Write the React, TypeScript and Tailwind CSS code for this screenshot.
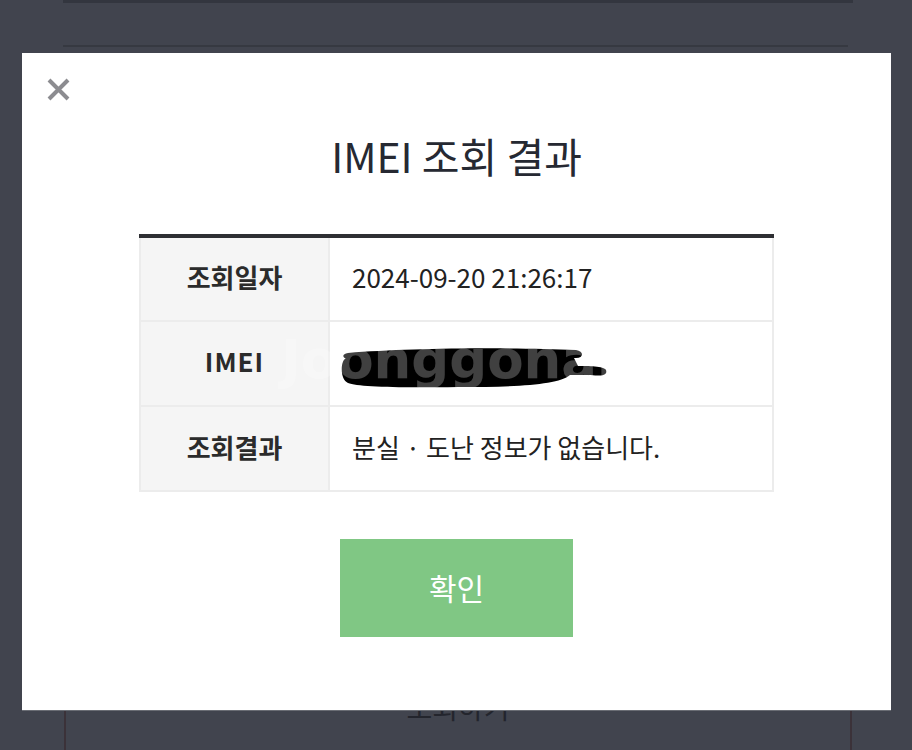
import React from "react";

const KR = { fontFamily: '"Noto Sans CJK KR", "Noto Sans", sans-serif' };

function CloseIcon() {
  return (
    <svg width="23" height="23" viewBox="0 0 23 23">
      <path d="M2 2 L21 21 M21 2 L2 21" stroke="#8c8c90" strokeWidth="4" strokeLinecap="butt" />
    </svg>
  );
}

function Scribble() {
  return (
    <svg width="272" height="44" viewBox="0 0 272 44">
      <g fill="#000">
        <path d="M10 6 C 70 1, 170 0, 238 3 C 246 4, 246 11, 238 11 L 12 12 C 4 12, 3 7, 10 6 Z" />
        <path d="M8 11 C 80 8, 180 8, 236 11 L 240 19 C 250 19, 266 19, 268 23 C 270 29, 262 29, 250 28 L 232 28 C 220 38, 180 40, 120 40 C 60 41, 20 40, 10 36 C 2 33, 2 14, 8 11 Z" />
      </g>
    </svg>
  );
}

export default function App() {
  return (
    <div className="relative h-[750px] w-[912px] overflow-hidden bg-[#41444e]" style={KR}>
      {/* background page */}
      <div className="flex flex-col">
        <div className="ml-[63px] h-[3px] w-[790px] bg-[#33363f]" />
        <div className="ml-[63px] mt-[42px] h-[2px] w-[785px] bg-[#363941]" />
        <div className="ml-[64px] mt-[640px] flex h-[70px] w-[788px] justify-center border-x-2 border-[#3b3239]">
          <span className="text-[28px] leading-[40px] text-[#23252d]">조회하기</span>
        </div>
      </div>

      {/* modal */}
      <div className="absolute left-[22px] top-[53px] flex h-[657px] w-[869px] flex-col items-center bg-white shadow-[0_1px_0_#6a6d74]">
        <div className="ml-[25px] mt-[25px] self-start">
          <CloseIcon />
        </div>
        <h1 className="mt-[30px] h-[48px] text-[41px] font-normal leading-[48px] text-[#262932]">IMEI 조회 결과</h1>

        <div className="mt-[55px] w-[635px] border-t-4 border-[#2e2f33]">
          <div className="grid grid-cols-[191px_1fr]">
            <div className="flex h-[84px] items-center justify-center border-2 border-t-0 border-[#ececec] bg-[#f5f5f5] pb-[5px] text-[26px] font-bold text-[#2b2b2b]">조회일자</div>
            <div className="flex h-[84px] items-center border-2 border-l-0 border-t-0 border-[#ececec] pb-[5px] pl-[22px] text-[26px] text-[#222]">2024-09-20 21:26:17</div>
            <div className="flex h-[85px] items-center justify-center border-2 border-t-0 border-[#ececec] bg-[#f5f5f5] pb-[6px] text-[26px] font-bold tracking-[1px] text-[#2b2b2b]">IMEI</div>
            <div className="flex h-[85px] items-start border-2 border-l-0 border-t-0 border-[#ececec] pl-[8px] pt-[25px]">
              <Scribble />
            </div>
            <div className="flex h-[85px] items-center justify-center border-2 border-t-0 border-[#ececec] bg-[#f5f5f5] pb-[5px] text-[26px] font-bold text-[#2b2b2b]">조회결과</div>
            <div className="flex h-[85px] items-center border-2 border-l-0 border-t-0 border-[#ececec] pb-[5px] pl-[22px] text-[26px] text-[#222]">분실 · 도난 정보가 없습니다.</div>
          </div>
        </div>

        <button className="mt-[47px] flex h-[98px] w-[233px] items-center justify-center bg-[#80c784] pb-[2px] text-[30px] text-white">확인</button>
      </div>

      {/* watermark */}
      <div
        className="pointer-events-none absolute left-[281px] top-[326px] text-[53px] font-bold leading-[68px] text-white/25"
        style={{ fontFamily: '"DejaVu Sans", sans-serif' }}
      >
        Joonggonara
      </div>
    </div>
  );
}
